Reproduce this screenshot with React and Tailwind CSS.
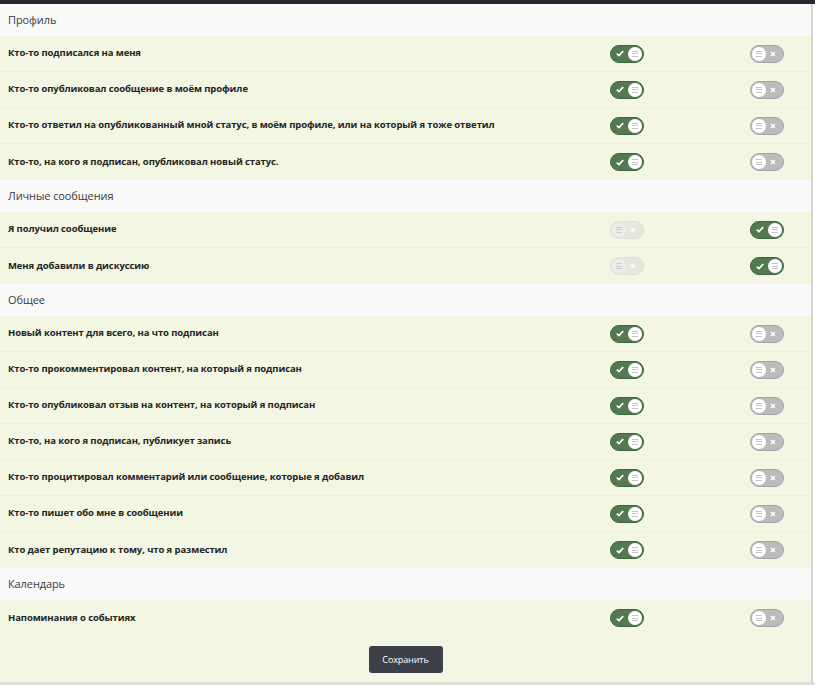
import React, { useState } from 'react';

const sections = [
  {
    title: 'Профиль',
    rows: [
      { label: 'Кто-то подписался на меня', a: true, b: false },
      { label: 'Кто-то опубликовал сообщение в моём профиле', a: true, b: false },
      { label: 'Кто-то ответил на опубликованный мной статус, в моём профиле, или на который я тоже ответил', a: true, b: false },
      { label: 'Кто-то, на кого я подписан, опубликовал новый статус.', a: true, b: false },
    ],
  },
  {
    title: 'Личные сообщения',
    rows: [
      { label: 'Я получил сообщение', a: false, b: true, aDisabled: true },
      { label: 'Меня добавили в дискуссию', a: false, b: true, aDisabled: true },
    ],
  },
  {
    title: 'Общее',
    rows: [
      { label: 'Новый контент для всего, на что подписан', a: true, b: false },
      { label: 'Кто-то прокомментировал контент, на который я подписан', a: true, b: false },
      { label: 'Кто-то опубликовал отзыв на контент, на который я подписан', a: true, b: false },
      { label: 'Кто-то, на кого я подписан, публикует запись', a: true, b: false },
      { label: 'Кто-то процитировал комментарий или сообщение, которые я добавил', a: true, b: false },
      { label: 'Кто-то пишет обо мне в сообщении', a: true, b: false },
      { label: 'Кто дает репутацию к тому, что я разместил', a: true, b: false },
    ],
  },
  {
    title: 'Календарь',
    rows: [{ label: 'Напоминания о событиях', a: true, b: false }],
  },
];

const Knob = ({ muted }) => (
  <span
    className={`flex h-[14px] w-[14px] flex-col items-center justify-center gap-[1.5px] rounded-full ${
      muted ? 'bg-[#ececec]' : 'bg-white'
    }`}
  >
    <span className="h-px w-[6px] bg-[#c4c4c4]" />
    <span className="h-px w-[6px] bg-[#c4c4c4]" />
    <span className="h-px w-[6px] bg-[#c4c4c4]" />
  </span>
);

const Toggle = ({ on, disabled, onClick }) => {
  if (on) {
    return (
      <button
        onClick={onClick}
        className="flex h-[18px] w-[34px] items-center justify-between rounded-full border border-[#3f6641] bg-[#52794f] pl-[5px] pr-px"
      >
        <svg width="8" height="7" viewBox="0 0 8 7">
          <path d="M0.8 3.6 L3 5.6 L7.2 1" fill="none" stroke="white" strokeWidth="1.8" />
        </svg>
        <Knob />
      </button>
    );
  }
  return (
    <button
      onClick={disabled ? undefined : onClick}
      className={`flex h-[18px] w-[34px] items-center justify-between rounded-full border pl-px pr-[7px] ${
        disabled ? 'border-[#d9dbd3] bg-[#e2e4dc] opacity-80' : 'border-[#a5a5a5] bg-[#bcbcbc]'
      }`}
    >
      <Knob muted={disabled} />
      <svg width="6" height="6" viewBox="0 0 6 6">
        <path d="M1 1 L5 5 M5 1 L1 5" stroke="white" strokeWidth="1.6" />
      </svg>
    </button>
  );
};

export default function App() {
  const [data, setData] = useState(sections);

  const flip = (si, ri, key) => {
    setData((prev) =>
      prev.map((s, i) =>
        i !== si
          ? s
          : { ...s, rows: s.rows.map((r, j) => (j !== ri ? r : { ...r, [key]: !r[key] })) }
      )
    );
  };

  return (
    <div className="w-[815px] bg-white font-['Open_Sans',sans-serif] text-[#222]">
      <div className="h-[4px] bg-[#262a30]" />
      <div className="w-[813px] border-r-2 border-[#d6d6d6]">
        {data.map((s, si) => (
          <div key={s.title}>
            <div className="flex h-[32px] items-center bg-[#f9f9f9] px-2 text-[11px] tracking-[-0.1px] text-[#3a3a3a]">
              {s.title}
            </div>
            {s.rows.map((r, ri) => (
              <div
                key={r.label}
                className="flex h-[36px] items-center border-b border-[#e9eede] bg-[#f2f6e3] pl-2 pr-[27px] last:border-b-0"
              >
                <div className="flex-1 text-[9.5px] font-bold tracking-[-0.1px]">{r.label}</div>
                <Toggle on={r.a} disabled={r.aDisabled} onClick={() => flip(si, ri, 'a')} />
                <div className="w-[106px]" />
                <Toggle on={r.b} onClick={() => flip(si, ri, 'b')} />
              </div>
            ))}
          </div>
        ))}
        <div className="flex h-[46px] items-start justify-center bg-[#f2f6e3] pt-[10px]">
          <button className="h-[27px] w-[74px] rounded-[3px] bg-[#3d4048] text-[9px] tracking-[-0.1px] text-white">
            Сохранить
          </button>
        </div>
      </div>
      <div className="h-[3px] bg-[#dedfd8]" />
    </div>
  );
}
